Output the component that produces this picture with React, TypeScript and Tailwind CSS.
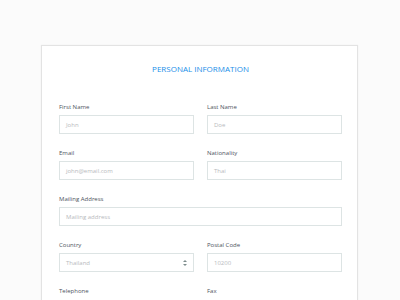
function Field({ label, placeholder, select }: { label: string; placeholder?: string; select?: boolean }) {
  return (
    <div className="flex flex-col">
      <div className="h-[8px] text-[6px] leading-[8px] text-[#4e5460] mb-[4px]">{label}</div>
      {placeholder !== undefined && (
        <div className="h-[19px] border border-[#dde4e4] bg-white flex items-center justify-between pl-[6px] pr-[6px]">
          <span className="text-[6px] leading-[8px] text-[#b8babd]">{placeholder}</span>
          {select && (
            <svg width="4" height="6" viewBox="0 0 4 6">
              <path d="M2 0 L4 2 L0 2 Z" fill="#7d8c8c" />
              <path d="M2 6 L4 4 L0 4 Z" fill="#7d8c8c" />
            </svg>
          )}
        </div>
      )}
    </div>
  );
}

export default function App() {
  return (
    <div
      className="w-[400px] h-[300px] overflow-hidden bg-[#fbfbfb] pt-[45px] pl-[41px]"
      style={{ fontFamily: '"Open Sans", "Liberation Sans", sans-serif' }}
    >
      <div className="w-[317px] h-[300px] bg-white border border-[#e3e3e3] shadow-[0_0_1px_rgba(0,0,0,0.08)] pt-[18px] pl-[17px] pr-[15px]">
        <div className="h-[10px] text-[8px] leading-[10px] text-center text-[#1a8ee8] mb-[29px]">
          PERSONAL INFORMATION
        </div>
        <div className="grid grid-cols-2 gap-x-[13px] gap-y-[15px]">
          <Field label="First Name" placeholder="John" />
          <Field label="Last Name" placeholder="Doe" />
          <Field label="Email" placeholder="john@email.com" />
          <Field label="Nationality" placeholder="Thai" />
          <div className="col-span-2">
            <Field label="Mailing Address" placeholder="Mailing address" />
          </div>
          <Field label="Country" placeholder="Thailand" select />
          <Field label="Postal Code" placeholder="10200" />
          <Field label="Telephone" />
          <Field label="Fax" />
        </div>
      </div>
    </div>
  );
}
